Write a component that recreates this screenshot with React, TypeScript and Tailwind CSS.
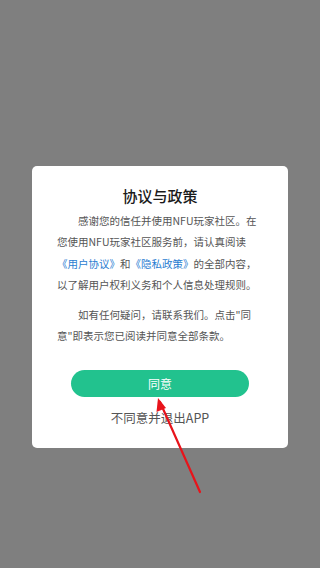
import React from "react";

function Line({ children, indent }: { children: React.ReactNode; indent?: boolean }) {
  return (
    <div className={indent ? "h-[21.5px] flex items-center whitespace-nowrap pl-[21px]" : "h-[21.5px] flex items-center whitespace-nowrap"}>
      <span>{children}</span>
    </div>
  );
}

export default function App() {
  return (
    <div
      className="relative w-[320px] h-[568px] bg-[#7f7f7f] flex flex-col items-center overflow-hidden"
      style={{ fontFamily: '"Noto Sans CJK SC", "Noto Sans", sans-serif' }}
    >
      <div className="mt-[166px] w-[256px] h-[282px] bg-white rounded-[5px] flex flex-col items-center px-[25px] pt-[20px]">
        <div className="h-[20px] flex items-center text-[15px] font-medium text-[#1a1a1a]">协议与政策</div>
        <div className="mt-[4px] w-full flex flex-col text-[10.5px] text-[#555555]">
          <Line indent>感谢您的信任并使用NFU玩家社区。在</Line>
          <Line>您使用NFU玩家社区服务前，请认真阅读</Line>
          <Line>
            <span className="text-[#2a7dd1]">《用户协议》</span>和<span className="text-[#2a7dd1]">《隐私政策》</span>的全部内容，
          </Line>
          <Line>以了解用户权利义务和个人信息处理规则。</Line>
          <div className="h-[8px]" />
          <Line indent>如有任何疑问，请联系我们。点击"同</Line>
          <Line>意"即表示您已阅读并同意全部条款。</Line>
        </div>
        <button className="mt-[23px] w-[178px] h-[27px] rounded-full bg-[#22c28e] text-white text-[12px] flex items-center justify-center">
          同意
        </button>
        <div className="mt-[11px] h-[20px] flex items-center text-[12.5px] text-[#555555]">不同意并退出APP</div>
      </div>
      <svg className="absolute left-0 top-0" width="320" height="568" viewBox="0 0 320 568">
        <line x1="200" y1="492" x2="160" y2="402" stroke="#e8141b" strokeWidth="2.2" strokeLinecap="round" />
        <polygon points="158,398 156.5,412 166,408" fill="#e8141b" />
      </svg>
    </div>
  );
}
